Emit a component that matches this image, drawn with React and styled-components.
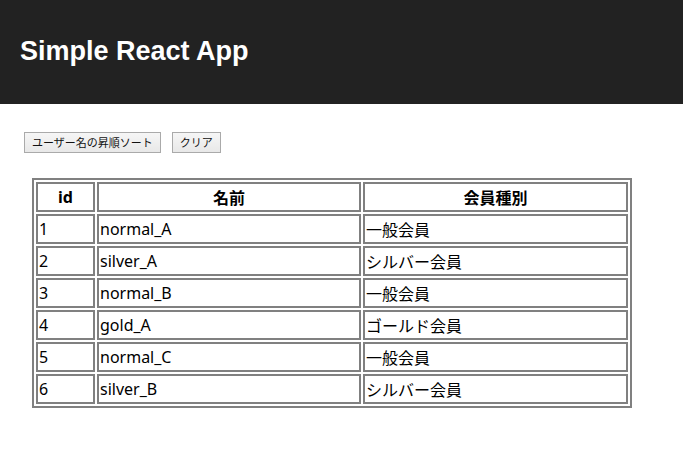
import React from 'react';
import styled, { createGlobalStyle } from 'styled-components';

const users = [
  { id: 1, name: 'normal_A', type: '一般会員' },
  { id: 2, name: 'silver_A', type: 'シルバー会員' },
  { id: 3, name: 'normal_B', type: '一般会員' },
  { id: 4, name: 'gold_A', type: 'ゴールド会員' },
  { id: 5, name: 'normal_C', type: '一般会員' },
  { id: 6, name: 'silver_B', type: 'シルバー会員' },
];

function App() {
  return (
    <>
      <GlobalStyle />
      <Header>
        <Title>Simple React App</Title>
      </Header>
      <Main>
        <Toolbar>
          <Button>ユーザー名の昇順ソート</Button>
          <Button>クリア</Button>
        </Toolbar>
        <Table>
          <colgroup>
            <col style={{ width: 59 }} />
            <col style={{ width: 264 }} />
            <col />
          </colgroup>
          <thead>
            <tr>
              <Th>id</Th>
              <Th>名前</Th>
              <Th>会員種別</Th>
            </tr>
          </thead>
          <tbody>
            {users.map((u) => (
              <tr key={u.id}>
                <Td>{u.id}</Td>
                <Td>{u.name}</Td>
                <Td>{u.type}</Td>
              </tr>
            ))}
          </tbody>
        </Table>
      </Main>
    </>
  );
}

export default App;

const GlobalStyle = createGlobalStyle`
  body {
    margin: 0;
    background: #fff;
    font-family: "Noto Sans", "Noto Sans CJK JP", sans-serif;
    color: #000;
  }
`

const Header = styled.header`
  height: 104px;
  background: #222;
  display: flex;
  align-items: center;
  padding-left: 20px;
`

const Title = styled.h1`
  margin: 0 0 2px;
  color: #fff;
  font-size: 27px;
  font-weight: bold;
  font-family: "Liberation Sans", Arial, sans-serif;
`

const Main = styled.main`
  padding: 28px 0 0 24px;
`

const Toolbar = styled.div`
  display: flex;
  gap: 11px;
`

const Button = styled.button`
  height: 21px;
  padding: 0 7px;
  border: 1px solid #aaa;
  background: linear-gradient(#f6f6f6, #e8e8e8);
  font-family: "Noto Sans CJK JP", sans-serif;
  font-size: 11px;
  color: #111;
  line-height: 1;
`

const Table = styled.table`
  margin: 25px 0 0 8px;
  width: 600px;
  table-layout: fixed;
  border: 2px solid #808080;
  border-spacing: 2px;
  font-family: "Noto Sans", "Noto Sans CJK JP", sans-serif;
  font-size: 16px;
`

const Th = styled.th`
  height: 26px;
  padding: 0 1px;
  border: 2px solid #808080;
  font-weight: bold;
  text-align: center;
`

const Td = styled.td`
  height: 26px;
  padding: 0 1px;
  border: 2px solid #808080;
  text-align: left;
`
